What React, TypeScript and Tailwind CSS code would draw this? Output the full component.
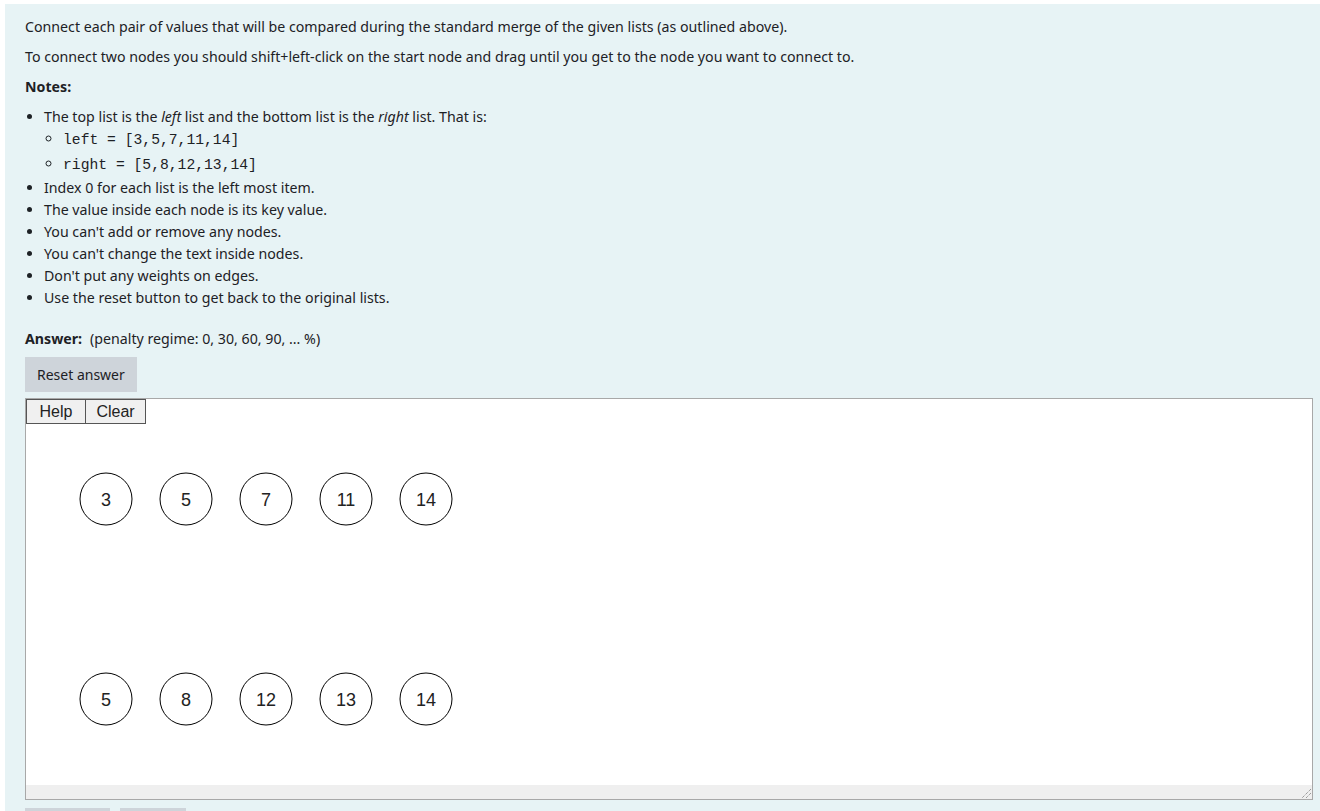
import React from 'react';

const top = [3, 5, 7, 11, 14];
const bottom = [5, 8, 12, 13, 14];

function Node({ cx, cy, label }: { cx: number; cy: number; label: number }) {
  return (
    <g>
      <circle cx={cx} cy={cy} r={26} fill="#fff" stroke="#000" strokeWidth={1} />
      <text
        x={cx}
        y={cy + 6.5}
        textAnchor="middle"
        fontFamily="'Liberation Sans', Arial, sans-serif"
        fontSize={18}
        fill="#222"
      >
        {label}
      </text>
    </g>
  );
}

export default function App() {
  return (
    <div className="min-h-screen bg-white pt-[4px] pl-[5px] overflow-hidden">
      <div
        className="bg-[#e7f3f5] pl-[20px] pr-[7px] pt-[12px] pb-[20px] text-[14.2px] leading-[21px] text-[#1d2125]"
        style={{ fontFamily: "'Noto Sans', sans-serif" }}
      >
        <p className="mb-[9px]">
          Connect each pair of values that will be compared during the standard merge of the given lists (as outlined above).
        </p>
        <p className="mb-[9px]">
          To connect two nodes you should shift+left-click on the start node and drag until you get to the node you want to connect to.
        </p>
        <p className="mb-[9px] font-bold">Notes:</p>
        <ul className="list-disc pl-[19px] leading-[22px]">
          <li>
            The top list is the <em>left</em> list and the bottom list is the <em>right</em> list. That is:
            <ul className="list-[circle] pl-[19px]">
              <li className="h-[24px]">
                <code className="font-[family-name:Liberation_Mono,monospace] text-[14.7px] text-[#1d2125]">left = [3,5,7,11,14]</code>
              </li>
              <li className="h-[25px] pt-[1px]">
                <code className="font-[family-name:Liberation_Mono,monospace] text-[14.7px] text-[#1d2125]">right = [5,8,12,13,14]</code>
              </li>
            </ul>
          </li>
          <li>Index 0 for each list is the left most item.</li>
          <li>The value inside each node is its key value.</li>
          <li>You can't add or remove any nodes.</li>
          <li>You can't change the text inside nodes.</li>
          <li>Don't put any weights on edges.</li>
          <li>Use the reset button to get back to the original lists.</li>
        </ul>

        <div className="mt-[19px]">
          <span className="font-bold">Answer:</span>
          <span className="ml-[8px]">(penalty regime: 0, 30, 60, 90, ... %)</span>
        </div>

        <button className="mt-[8px] h-[35px] px-[12px] bg-[#ced4da] text-[#1d2125] text-[14px]">Reset answer</button>

        <div className="mt-[6px] h-[402px] border border-[#a8a8a8] bg-white flex flex-col">
          <div className="flex h-[25px] shrink-0 font-[family-name:Liberation_Sans,Arial,sans-serif]">
            <button className="w-[60px] h-[25px] border border-[#555] bg-[#f0f0f0] text-[16px] text-[#222] leading-none">Help</button>
            <button className="w-[60px] h-[25px] border border-l-0 border-[#555] bg-[#f0f0f0] text-[16px] text-[#222] leading-none">Clear</button>
          </div>
          <svg className="block w-full h-[361px] shrink-0">
            {top.map((v, i) => (
              <Node key={'t' + i} cx={80 + i * 80} cy={75} label={v} />
            ))}
            {bottom.map((v, i) => (
              <Node key={'b' + i} cx={80 + i * 80} cy={275} label={v} />
            ))}
          </svg>
          <div className="h-[14px] bg-[#efefef] flex justify-end items-end">
            <svg width="12" height="12" className="block">
              <line x1="11" y1="2" x2="2" y2="11" stroke="#777" strokeWidth="1" strokeDasharray="1 1" />
              <line x1="11" y1="6" x2="6" y2="11" stroke="#777" strokeWidth="1" strokeDasharray="1 1" />
            </svg>
          </div>
        </div>

        <div className="mt-[8px] flex gap-[10px]">
          <div className="w-[85px] h-[35px] bg-[#ced4da]" />
          <div className="w-[66px] h-[35px] bg-[#ced4da]" />
        </div>
      </div>
    </div>
  );
}
